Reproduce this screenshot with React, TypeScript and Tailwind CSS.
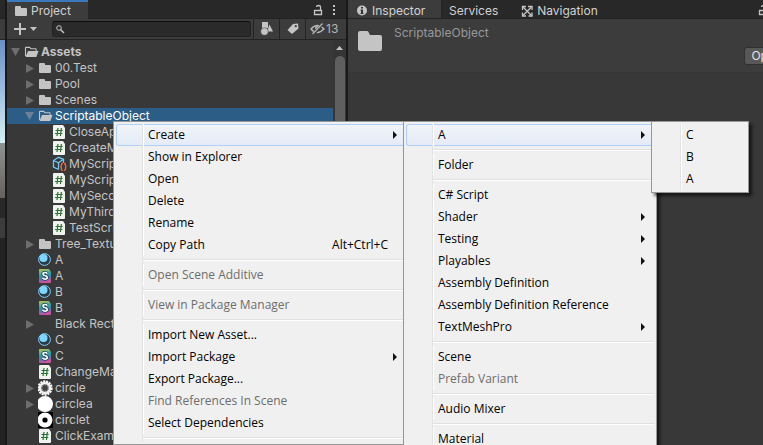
import type { ReactNode } from 'react'
import clsx from 'clsx'

type IconName = 'folder' | 'open' | 'script' | 'asset' | 'material' | 'shader' | 'none' | 'ring' | 'disc' | 'target'

type TreeItem = {
  name: string
  depth: 0 | 1 | 2
  icon: IconName
  fold?: 'open' | 'closed'
  selected?: boolean
}

type MenuEntry = '-' | {
  label: string
  shortcut?: string
  sub?: boolean
  disabled?: boolean
  active?: boolean
}

const tree: TreeItem[] = [
  { name: 'Assets', depth: 0, icon: 'open', fold: 'open' },
  { name: '00.Test', depth: 1, icon: 'folder', fold: 'closed' },
  { name: 'Pool', depth: 1, icon: 'folder', fold: 'closed' },
  { name: 'Scenes', depth: 1, icon: 'folder', fold: 'closed' },
  { name: 'ScriptableObject', depth: 1, icon: 'open', fold: 'open', selected: true },
  { name: 'CloseApp', depth: 2, icon: 'script' },
  { name: 'CreateMenu', depth: 2, icon: 'script' },
  { name: 'MyScriptable', depth: 2, icon: 'asset' },
  { name: 'MyScriptable', depth: 2, icon: 'script' },
  { name: 'MySecond', depth: 2, icon: 'script' },
  { name: 'MyThird', depth: 2, icon: 'script' },
  { name: 'TestScript', depth: 2, icon: 'script' },
  { name: 'Tree_Textures', depth: 1, icon: 'folder', fold: 'closed' },
  { name: 'A', depth: 1, icon: 'material' },
  { name: 'A', depth: 1, icon: 'shader' },
  { name: 'B', depth: 1, icon: 'material' },
  { name: 'B', depth: 1, icon: 'shader' },
  { name: 'Black Rect', depth: 1, icon: 'none', fold: 'closed' },
  { name: 'C', depth: 1, icon: 'material' },
  { name: 'C', depth: 1, icon: 'shader' },
  { name: 'ChangeMaterial', depth: 1, icon: 'script' },
  { name: 'circle', depth: 1, icon: 'ring', fold: 'closed' },
  { name: 'circlea', depth: 1, icon: 'disc', fold: 'closed' },
  { name: 'circlet', depth: 1, icon: 'target' },
  { name: 'ClickExample', depth: 1, icon: 'script' },
]

const assetMenu: MenuEntry[] = [
  { label: 'Create', sub: true, active: true },
  { label: 'Show in Explorer' },
  { label: 'Open' },
  { label: 'Delete' },
  { label: 'Rename' },
  { label: 'Copy Path', shortcut: 'Alt+Ctrl+C' },
  '-',
  { label: 'Open Scene Additive', disabled: true },
  '-',
  { label: 'View in Package Manager', disabled: true },
  '-',
  { label: 'Import New Asset...' },
  { label: 'Import Package', sub: true },
  { label: 'Export Package...' },
  { label: 'Find References In Scene', disabled: true },
  { label: 'Select Dependencies' },
  '-',
]

const createMenu: MenuEntry[] = [
  { label: 'A', sub: true, active: true },
  '-',
  { label: 'Folder' },
  '-',
  { label: 'C# Script' },
  { label: 'Shader', sub: true },
  { label: 'Testing', sub: true },
  { label: 'Playables', sub: true },
  { label: 'Assembly Definition' },
  { label: 'Assembly Definition Reference' },
  { label: 'TextMeshPro', sub: true },
  '-',
  { label: 'Scene' },
  { label: 'Prefab Variant', disabled: true },
  '-',
  { label: 'Audio Mixer' },
  '-',
  { label: 'Material' },
]

const subMenu: MenuEntry[] = [{ label: 'C' }, { label: 'B' }, { label: 'A' }]

const indent = { 0: 'pl-1', 1: 'pl-[18px]', 2: 'pl-8' }

function Icon({ children }: { children?: ReactNode }) {
  return (
    <svg viewBox="0 0 16 16" className="size-4 shrink-0" aria-hidden="true">
      {children}
    </svg>
  )
}

function TreeIcon({ name }: { name: IconName }) {
  switch (name) {
    case 'folder':
      return (
        <Icon>
          <path d="M1 4q0-1 1-1h4q1 0 1 1v1h5q1 0 1 1v6q0 1-1 1H2q-1 0-1-1z" fill="#c4c4c4" />
        </Icon>
      )
    case 'open':
      return (
        <Icon>
          <path d="M1.500 12V4q0-.6.6-.6h3.600l1.200 1.400h4.600q.6 0 .6.6V7" fill="none" stroke="#c4c4c4" strokeWidth="1.100" />
          <path d="M4 7h10.600l-2.300 6H1.500z" fill="#c4c4c4" />
        </Icon>
      )
    case 'script':
      return (
        <Icon>
          <path d="M1 2q0-1 1-1h9l2 3v10q0 1-1 1H2q-1 0-1-1z" fill="#f0f2f0" />
          <path d="M6 4L5 12M9.400 4l-1 8M3.500 6.500h7.200M3 9.500h7.200" stroke="#27762f" strokeWidth="1.200" fill="none" />
        </Icon>
      )
    case 'asset':
      return (
        <Icon>
          <path d="M6.500 13.500l-5-2.500V4.500l5-3.200 5 2V7M1.500 4.500l5 2.300 5-3.500M6.500 7v6.500" fill="none" stroke="#6fc7f5" strokeWidth="1.300" />
          <path d="M10.800 7.500q-1.500 0-1.500 1.200v1.100q0 .9-1 .9 1 0 1 .9v1.500q0 1.200 1.500 1.200M12 7.500q1.500 0 1.500 1.200v1.100q0 .9 1 .9-1 0-1 .9v1.500q0 1.200-1.500 1.200" fill="none" stroke="#ff6a3c" strokeWidth="1.300" />
        </Icon>
      )
    case 'material':
      return (
        <Icon>
          <circle cx="6.500" cy="7.500" r="5.900" fill="#263c49" stroke="#7fd0fa" strokeWidth="1" />
          <circle cx="5.500" cy="6" r="4" fill="#7fd6ff" />
        </Icon>
      )
    case 'shader':
      return (
        <Icon>
          <defs>
            <linearGradient id="shader" x1="0" y1="0" x2="0.200" y2="1">
              <stop offset="0" stopColor="#c5c54a" />
              <stop offset="0.450" stopColor="#2ba3a6" />
              <stop offset="0.700" stopColor="#4d7cb5" />
              <stop offset="1" stopColor="#d04fa0" />
            </linearGradient>
          </defs>
          <path d="M1 2q0-1 1-1h9l2 3v10q0 1-1 1H2q-1 0-1-1z" fill="url(#shader)" />
          <path d="M9.300 5.500Q8.500 4.500 7 4.500q-2.100 0-2.100 1.600Q4.900 7.400 7 7.700q2.300.3 2.300 1.900 0 1.600-2.300 1.600-1.600 0-2.500-1.100" fill="none" stroke="#17444d" strokeWidth="3" />
          <path d="M9.300 5.500Q8.500 4.500 7 4.500q-2.100 0-2.100 1.600Q4.900 7.400 7 7.700q2.300.3 2.300 1.900 0 1.600-2.300 1.600-1.600 0-2.500-1.100" fill="none" stroke="#fff" strokeWidth="1.600" />
        </Icon>
      )
    case 'ring':
      return (
        <Icon>
          <circle cx="7" cy="8" r="6.800" fill="none" stroke="#fff" strokeWidth="1.800" strokeDasharray="2 1" />
          <circle cx="7" cy="8" r="5" fill="none" stroke="#f0f0f0" strokeWidth="3" />
          <circle cx="7" cy="8" r="3.400" fill="#404040" stroke="#aaa" strokeWidth="1.500" strokeDasharray="1 1" />
        </Icon>
      )
    case 'disc':
      return (
        <Icon>
          <circle cx="7" cy="8" r="8" fill="#fff" />
        </Icon>
      )
    case 'target':
      return (
        <Icon>
          <path d="M0 0h15v16H0z" fill="#000" />
          <circle cx="7" cy="8" r="7.500" fill="#fff" />
          <circle cx="7" cy="8" r="2.600" fill="#000" />
        </Icon>
      )
    default:
      return <Icon />
  }
}

function LockIcon() {
  return (
    <Icon>
      <path d="M4.500 9.500h7v4h-7zM10.500 9.500V6q0-1.500-2-1.500T6.500 6" fill="none" stroke="#c4c4c4" strokeWidth="1.300" />
    </Icon>
  )
}

function TreeRow({ item }: { item: TreeItem }) {
  return (
    <li
      role="treeitem"
      aria-selected={!!item.selected}
      className={clsx(
        'flex h-4 items-center whitespace-nowrap',
        indent[item.depth],
        item.selected ? 'bg-[#2c5d87] text-white' : 'text-[#c4c4c4]',
        item.depth === 0 && 'font-bold',
      )}
    >
      <svg viewBox="0 0 13 16" className="h-4 w-[13px] shrink-0" aria-hidden="true">
        {item.fold === 'open' && <path d="M0 4h9L4.500 12z" fill={item.selected ? '#6a8299' : '#6e6e6e'} />}
        {item.fold === 'closed' && <path d="M1 4l8 4.500L1 13z" fill="#6e6e6e" />}
      </svg>
      <TreeIcon name={item.icon} />
      <span className="ml-px">{item.name}</span>
    </li>
  )
}

function Menu({ entries, label, className }: { entries: MenuEntry[]; label: string; className: string }) {
  return (
    <ul
      role="menu"
      aria-label={label}
      className={clsx(
        'absolute top-[121px] border border-[#979797] bg-[#f0f0f0] p-0.5 text-[12px] text-black shadow-[3px_3px_3px_rgba(0,0,0,0.6)]',
        className,
      )}
    >
      {entries.map((entry, i) =>
        entry === '-' ? (
          <li key={i} role="separator" className="flex h-2 items-center">
            <span className="h-2 w-[27px] border-r border-[#e2e3e3]" />
            <span className="h-0.5 flex-1 border-b border-white bg-[#e0e0e0]" />
          </li>
        ) : (
          <li key={i} role="none">
            <button
              role="menuitem"
              disabled={entry.disabled}
              className={clsx(
                'flex h-[22px] w-full items-center whitespace-nowrap text-left',
                entry.active && 'rounded-[3px] bg-linear-to-b from-[#f2f4f8] to-[#e3ebf7] ring-1 ring-inset ring-[#aecff7]',
                entry.disabled && 'text-[#6d6d6d]',
              )}
            >
              <span className="h-[22px] w-[27px] shrink-0 border-r border-[#e2e3e3]" />
              <span className="h-[22px] w-px shrink-0 bg-white" />
              <span className="ml-1 flex-1">{entry.label}</span>
              {entry.shortcut && <span className="mr-[18px]">{entry.shortcut}</span>}
              {entry.sub && (
                <svg viewBox="0 0 4 8" className="mr-[9px] h-2 w-1" aria-hidden="true">
                  <path d="M0 0l4 4-4 4z" fill="#111" />
                </svg>
              )}
            </button>
          </li>
        ),
      )}
    </ul>
  )
}

function SceneEdge() {
  return (
    <div className="flex w-[5px] shrink-0 flex-col bg-[#232323]">
      <div className="h-[18px] bg-[#282828]" />
      <div className="my-px h-5 bg-[#3c3c3c]" />
      <div className="h-[103px] bg-linear-to-b from-[#6d8fc2] via-[#9fbfe0] to-[#d5f0f2]" />
      <div className="h-[55px] bg-linear-to-b from-[#8e9491] to-[#67605c]" />
      <div className="h-5 bg-[#282828]" />
      <div className="h-5 bg-[#3c3c3c]" />
    </div>
  )
}

function ProjectPanel() {
  return (
    <section className="ml-0.5 flex w-[339px] shrink-0 flex-col overflow-hidden bg-[#383838]">
      <div className="flex h-[19px] shrink-0 border-b border-[#232323] bg-[#282828]">
        <button className="-mb-px flex h-[19px] w-[81px] items-center border-t-2 border-[#3a79bb] bg-[#3c3c3c] pl-[7px]">
          <TreeIcon name="folder" />
          <span className="ml-px">Project</span>
        </button>
        <div className="ml-auto flex items-center pr-1">
          <button aria-label="Lock">
            <LockIcon />
          </button>
          <button aria-label="Panel options">
            <Icon>
              <path d="M7 4h2v2H7zM7 8h2v2H7zM7 12h2v2H7z" fill="#c4c4c4" />
            </Icon>
          </button>
        </div>
      </div>
      <div className="flex h-[21px] shrink-0 items-center border-b border-[#232323] bg-[#3c3c3c]">
        <button aria-label="Create" className="ml-1.5 w-6">
          <svg viewBox="0 0 24 16" className="h-4 w-6" aria-hidden="true">
            <path d="M1 8h12M7 2v12" stroke="#c4c4c4" strokeWidth="2" />
            <path d="M17 6h7l-3.500 4z" fill="#c4c4c4" />
          </svg>
        </button>
        <label className="ml-[15px] flex h-4 min-w-0 flex-1 items-center rounded-[3px] border border-[#212121] border-t-[#0d0d0d] bg-[#2a2a2a]">
          <svg viewBox="0 0 16 16" className="size-4 shrink-0" aria-hidden="true">
            <circle cx="6" cy="7" r="2.300" fill="none" stroke="#c4c4c4" strokeWidth="1" />
            <path d="M7.500 8.500l3.500 3.500" stroke="#c4c4c4" strokeWidth="1.500" />
          </svg>
          <input type="text" aria-label="Search assets" className="min-w-0 flex-1 bg-transparent outline-none" />
        </label>
        <button aria-label="Search by type" className="ml-0.5 flex h-5 w-[26px] items-center justify-center border-l border-[#232323]">
          <Icon>
            <path d="M3 1h6v6H3z" fill="#c4c4c4" />
            <path d="M10.500 3.500l3.500 7H8z" fill="#c4c4c4" />
            <circle cx="5.500" cy="10.500" r="3.800" fill="#c4c4c4" stroke="#3c3c3c" strokeWidth=".5" />
          </Icon>
        </button>
        <button aria-label="Search by label" className="flex h-5 w-[26px] items-center justify-center border-l border-[#232323]">
          <Icon>
            <path d="M8 3l5-.5.500 5L7 13 2.500 9z" fill="#c4c4c4" />
            <circle cx="10.800" cy="5.200" r="1.100" fill="#3c3c3c" />
          </Icon>
        </button>
        <button aria-label="Hidden packages" className="flex h-5 w-[41px] items-center border-l border-[#232323] pl-1 text-[#b5b5b5]">
          <Icon>
            <path d="M1 8q6-7 13 0-7 7-13 0z" fill="none" stroke="#b5b5b5" strokeWidth="1.300" />
            <path d="M5 8a2.500 2.500 0 0 1 5-1" fill="#b5b5b5" />
            <path d="M3 13.500L13 2.500" stroke="#3c3c3c" strokeWidth="3" />
            <path d="M2.500 13L12.500 2.500" stroke="#b5b5b5" strokeWidth="1.300" />
          </Icon>
          <span>13</span>
        </button>
      </div>
      <div className="flex min-h-0 flex-1">
        <ul role="tree" aria-label="Assets" className="min-w-0 flex-1 overflow-hidden pt-1">
          {tree.map((item, i) => (
            <TreeRow key={i} item={item} />
          ))}
        </ul>
        <div className="flex w-[13px] flex-col items-center bg-[#353535]">
          <svg viewBox="0 0 13 16" className="h-4 w-[13px] shrink-0" aria-hidden="true">
            <path d="M3 10h7L6.500 6z" fill="#c4c4c4" />
          </svg>
          <div className="w-2.5 flex-1 rounded-t-[5px] bg-[#5f5f5f]" />
        </div>
      </div>
    </section>
  )
}

function InspectorPanel() {
  return (
    <section className="ml-0.5 flex min-w-0 flex-1 flex-col overflow-hidden bg-[#383838]">
      <div className="flex h-[19px] shrink-0 overflow-hidden border-b border-[#232323] bg-[#282828]">
        <button className="-mb-px flex h-[19px] w-[94px] shrink-0 items-center border-r border-[#232323] bg-[#3c3c3c] pl-1.5 pt-0.5">
          <Icon>
            <circle cx="8" cy="7.500" r="5" fill="#c4c4c4" />
            <path d="M7 4h2v1.500H7zM6.500 6.500H9V10h.5v1h-3v-1H7V7.500h-.5z" fill="#333" />
          </Icon>
          <span className="ml-0.5">Inspector</span>
        </button>
        <button className="ml-[7px] flex shrink-0 items-center pt-1">Services</button>
        <button className="ml-[21px] flex shrink-0 items-center pt-1">
          <Icon>
            <path d="M4 4l9 9M12.500 4L4 12.500" stroke="#c4c4c4" strokeWidth="1.300" />
            <path d="M3.500 7V3.500H7M9 3.500h4V7M13 9.500V13H9.500M7 13H3.500V9.500" fill="none" stroke="#c4c4c4" strokeWidth="1.300" />
          </Icon>
          <span className="ml-0.5">Navigation</span>
        </button>
        <button aria-label="Lock" className="-mr-2 ml-auto shrink-0">
          <LockIcon />
        </button>
      </div>
      <header className="flex h-[54px] shrink-0 border-b border-[#353535] bg-[#3c3c3c] pl-2.5">
        <svg viewBox="0 0 24 20" className="mt-3 h-5 w-6 shrink-0" aria-hidden="true">
          <path d="M0 2q0-2 2-2h7q1 0 1.500 1L12 4h10q2 0 2 2v12q0 2-2 2H2q-2 0-2-2z" fill="#c4c4c4" />
        </svg>
        <h1 className="ml-3 mt-1.5 text-[#999]">ScriptableObject</h1>
        <button className="-mr-[26px] ml-auto mt-7 flex h-[18px] shrink-0 items-center rounded-[3px] border border-[#303030] bg-[#585858] px-1.5 text-[#e4e4e4]">
          Open
        </button>
      </header>
    </section>
  )
}

export default function App() {
  return (
    <main className="relative flex h-screen overflow-hidden bg-[#191919] font-[Inter,sans-serif] text-[12px] leading-4 text-[#d2d2d2]">
      <SceneEdge />
      <ProjectPanel />
      <InspectorPanel />
      <div className="font-['Open_Sans','Noto_Sans_CJK_KR',sans-serif]">
        <Menu entries={assetMenu} label="Asset" className="left-[113px] w-[296px]" />
        <Menu entries={createMenu} label="Create" className="left-[403px] w-[254px]" />
        <Menu entries={subMenu} label="A" className="left-[651px] w-[98px]" />
      </div>
    </main>
  )
}
